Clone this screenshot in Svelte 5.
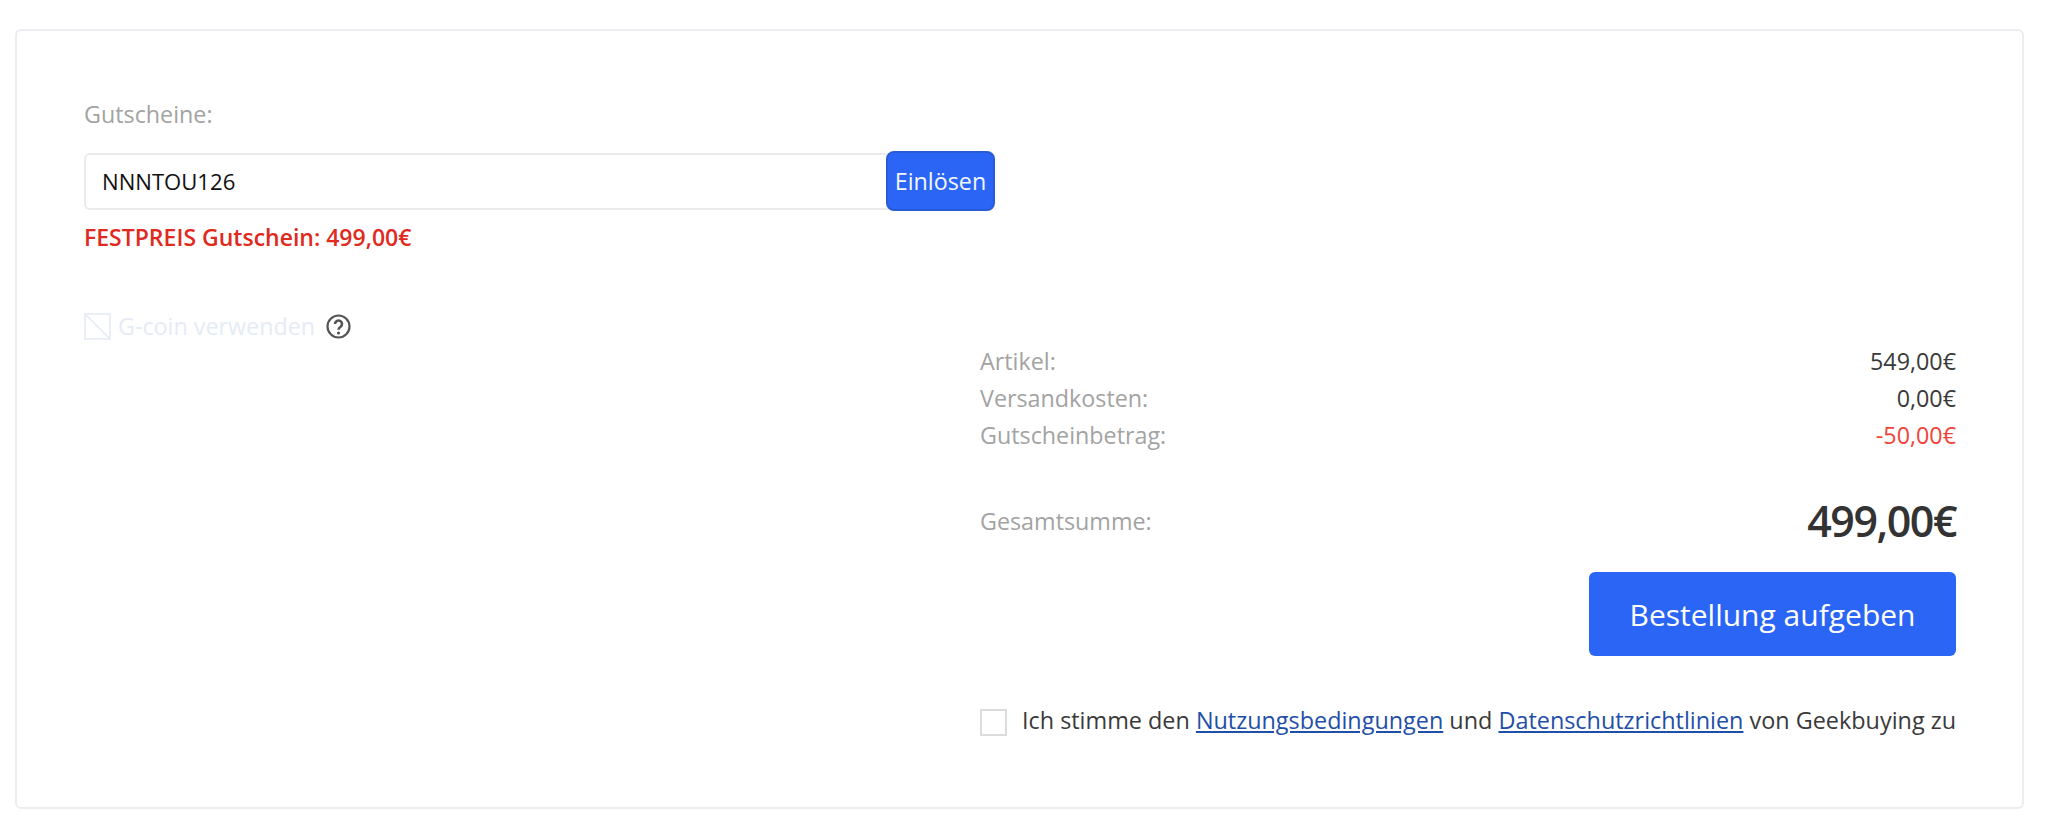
<script>
	const rows = [
		{ label: 'Artikel:', value: '549,00€' },
		{ label: 'Versandkosten:', value: '0,00€' },
		{ label: 'Gutscheinbetrag:', value: '-50,00€', discount: true }
	];
</script>

<div class="page">
	<section class="card">
		<div class="left">
			<div class="coupon-title">Gutscheine:</div>
			<div class="coupon-row">
				<input class="coupon-input" type="text" value="NNNTOU126" />
				<button class="redeem">Einlösen</button>
			</div>
			<div class="coupon-msg">FESTPREIS Gutschein: 499,00€</div>
			<div class="gcoin">
				<svg class="gcoin-box" width="27" height="27" viewBox="0 0 27 27" fill="none" stroke="#e3e9f3" stroke-width="1.5">
					<rect x="1" y="1" width="25" height="25" />
					<path d="M1 1 26 26" />
				</svg>
				<span>G-coin verwenden</span>
				<svg width="25" height="25" viewBox="0 0 25 25" fill="none">
					<circle cx="12.5" cy="12.5" r="11" stroke="#555" stroke-width="2.2" />
					<path d="M9 10a3.5 3.5 0 1 1 5.6 2.8c-1.3.9-2.1 1.5-2.1 3" stroke="#555" stroke-width="2.6" />
					<circle cx="12.5" cy="19" r="1.6" fill="#555" />
				</svg>
			</div>
		</div>

		<div class="right">
			<div class="rows">
				{#each rows as row}
					<div class="row">
						<span class="label">{row.label}</span>
						<span class="value" class:discount={row.discount}>{row.value}</span>
					</div>
				{/each}
			</div>
			<div class="total">
				<span class="label">Gesamtsumme:</span>
				<span class="total-value">499,00€</span>
			</div>
			<div class="submit-wrap">
				<button class="submit">Bestellung aufgeben</button>
			</div>
			<div class="terms">
				<span class="terms-box"></span>
				<span class="terms-text">Ich stimme den <a href="#a">Nutzungsbedingungen</a> und <a href="#b">Datenschutzrichtlinien</a> von Geekbuying zu</span>
			</div>
		</div>
	</section>
</div>

<style>
	:global(body) {
		margin: 0;
		background: #fff;
	}

	.page {
		padding: 29px 24px 27px 15px;
		font-family: "Open Sans", sans-serif;
		font-size: 23.3px;
		color: #333;
	}

	.card {
		box-sizing: border-box;
		height: 780px;
		padding: 0 66px 0 67px;
		border: 2px solid #ebedf0;
		border-radius: 6px;
		display: grid;
		grid-template-columns: 896px 1fr;
	}

	.left {
		padding-top: 67px;
		min-width: 0;
	}

	.coupon-title {
		color: #a3a3a3;
		line-height: 32px;
	}

	.coupon-row {
		display: flex;
		align-items: center;
		margin-top: 21px;
		width: 912px;
	}

	.coupon-input {
		box-sizing: border-box;
		width: 804px;
		height: 57px;
		padding: 0 16px;
		border: 2px solid #ebebeb;
		border-right: 0;
		border-radius: 6px 0 0 6px;
		font: inherit;
		font-size: 22.1px;
		color: #111;
		outline: none;
	}

	.redeem {
		box-sizing: border-box;
		width: 109px;
		height: 60px;
		margin-left: -2px;
		padding: 0;
		background: #2b65f6;
		border: 2px solid #2a5bd7;
		border-radius: 8px;
		color: #f4f7ff;
		font: inherit;
		flex-shrink: 0;
	}

	.coupon-msg {
		margin-top: 11px;
		color: #e02a20;
		font-weight: 600;
		font-size: 23px;
		line-height: 31px;
	}

	.gcoin {
		display: flex;
		align-items: center;
		margin-top: 57px;
		color: #e5ebf4;
	}

	.gcoin span {
		margin: 0 11px 0 7px;
	}

	.right {
		padding-top: 312px;
		min-width: 0;
	}

	.row {
		display: flex;
		justify-content: space-between;
		line-height: 37px;
	}

	.label {
		color: #a3a3a3;
	}

	.value {
		color: #3a3a3a;
	}

	.discount {
		color: #f0433a;
	}

	.total {
		display: flex;
		justify-content: space-between;
		align-items: center;
		margin-top: 36px;
	}

	.total-value {
		font-size: 43px;
		font-weight: 600;
		line-height: 62px;
		color: #333;
		letter-spacing: -1.5px;
	}

	.submit-wrap {
		display: flex;
		justify-content: flex-end;
		margin-top: 20px;
	}

	.submit {
		width: 367px;
		height: 84px;
		background: #2b65f6;
		border: 0;
		border-radius: 6px;
		color: #fff;
		font: inherit;
		font-size: 30px;
	}

	.terms {
		display: flex;
		align-items: center;
		justify-content: space-between;
		margin-top: 53px;
	}

	.terms-box {
		box-sizing: border-box;
		width: 27px;
		height: 27px;
		border: 2px solid #dcdcdc;
	}

	.terms-text {
		font-size: 23.4px;
		color: #3a3a3a;
		white-space: nowrap;
		margin-top: -5px;
	}

	.terms-text a {
		color: #1f4fa8;
	}
</style>
